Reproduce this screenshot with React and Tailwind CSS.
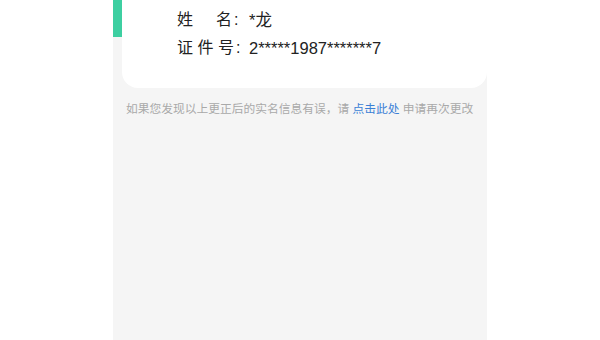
export default function App() {
  const font = { fontFamily: '"Liberation Sans", "Noto Sans CJK SC", sans-serif' };
  return (
    <div className="w-[600px] h-[340px] bg-white flex justify-center overflow-hidden" style={font}>
      <div className="w-[374px] h-full bg-[#f5f5f5] flex flex-col">
        <div className="flex items-start">
          <div className="w-[9px] h-[37px] bg-[#3dcfa1]" />
          <div className="flex-1 h-[88px] bg-white rounded-b-[16px] pl-[55px] pt-[6px] text-[16px] leading-[28px] text-[#222]">
            <div className="flex">
              <div className="w-[72px] flex">
                <span>姓</span>
                <span className="ml-[23px]">名</span>
                <span className="ml-[2px]">:</span>
              </div>
              <span className="text-[16.5px]">*龙</span>
            </div>
            <div className="flex">
              <div className="w-[72px] flex">
                <span className="tracking-[4.5px]">证件</span>
                <span>号</span>
                <span className="ml-[2px]">:</span>
              </div>
              <span className="text-[16.5px]">2*****1987*******7</span>
            </div>
          </div>
        </div>
        <p className="mt-[13px] pl-[13px] text-[11.75px] leading-[16px] text-[#a9a9a9] whitespace-nowrap">
          如果您发现以上更正后的实名信息有误，请 <span className="text-[#3b7fd5]">点击此处</span> 申请再次更改
        </p>
      </div>
    </div>
  );
}
